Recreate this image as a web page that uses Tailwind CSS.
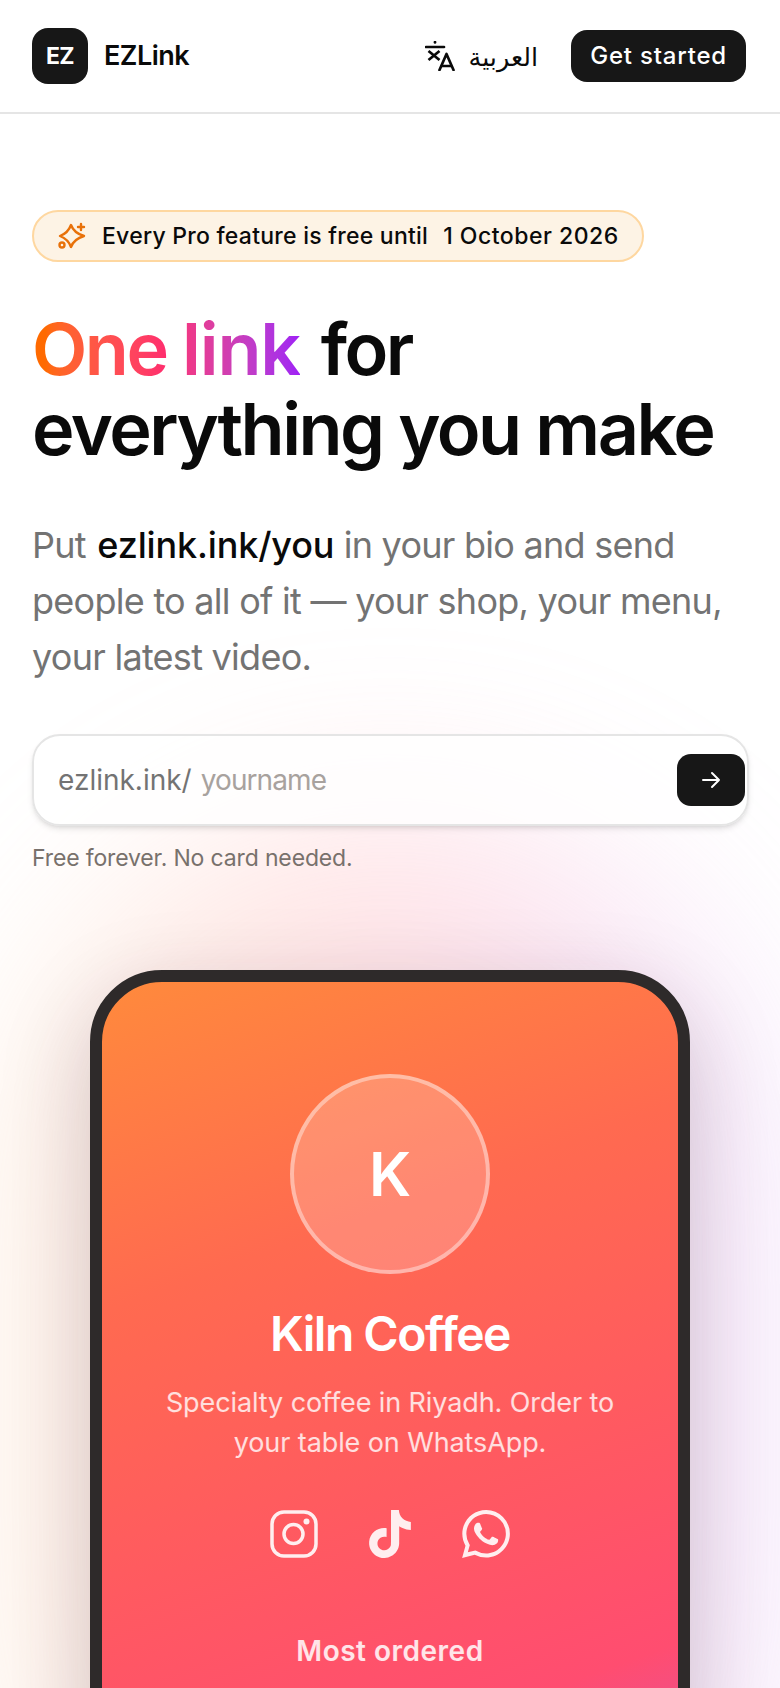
<!DOCTYPE html>
<html lang="en">
<head>
<meta charset="utf-8">
<script src="https://cdn.jsdelivr.net/npm/@tailwindcss/browser@4"></script>
<title>EZLink</title>
</head>
<body class="bg-white font-['Inter','Noto_Sans',sans-serif] text-[#0a0a0a] h-[1688px] overflow-hidden relative">
<div class="absolute left-0 right-0 top-[800px] h-[1200px] rounded-full bg-gradient-to-r from-orange-200 via-rose-300 to-purple-300 blur-[90px] opacity-30"></div>
<header class="relative h-[114px] border-b-2 border-[#e5e5e5] flex items-center justify-between pl-[32px] pr-[34px]">
  <div class="flex items-center gap-[16px]">
    <div class="w-[56px] h-[56px] rounded-[16px] bg-[#171717] text-white flex items-center justify-center text-[23px] font-bold tracking-[-0.5px]">EZ</div>
    <span class="text-[27px] font-semibold tracking-[-0.5px]">EZLink</span>
  </div>
  <div class="flex items-center gap-[33px]">
    <div class="flex items-center gap-[13px]">
      <svg class="w-[30px] h-[30px]" viewBox="0 0 30 30" fill="none" stroke="#0a0a0a" stroke-width="2.700" stroke-linecap="round" stroke-linejoin="round"><path d="M1 6h18"/><path d="M10 1v.5"/><path d="M3.500 10l11 9M14.500 10l-11 9" stroke-linecap="butt"/><path d="M14.500 29l7-16 7 16"/><path d="M17 25h9"/></svg>
      <span class="text-[25.500px] font-['Noto_Sans','DejaVu_Sans',sans-serif]">العربية</span>
    </div>
    <button class="h-[52px] px-[19px] rounded-[16px] bg-[#171717] text-white text-[24px] font-medium tracking-[0.8px]">Get started</button>
  </div>
</header>
<main class="relative px-[32px] pt-[96px]">
  <div class="inline-flex items-center gap-[15px] h-[52px] pl-[24px] pr-[23px] rounded-full border-2 border-[#fed7a0] bg-[#fdf3e5] text-[23px] font-medium whitespace-nowrap">
    <svg class="w-[28px] h-[28px] shrink-0 mr-[1px]" viewBox="0 0 28 28" fill="none" stroke="#e8710a" stroke-width="2.400" stroke-linecap="round" stroke-linejoin="round"><path d="M13 3Q16 11 26 14Q16 17 13 25Q10 17 2 14Q10 11 13 3Z"/><path d="M23 2v6M20 5h6"/><circle cx="4" cy="23" r="2.500"/></svg>
    <span class="tracking-[0.25px]">Every Pro feature is free until</span>
    <span class="tracking-[0.5px]">1 October 2026</span>
  </div>
  <h1 class="mt-[47px] text-[72px] leading-[80px] font-semibold tracking-[-2.500px] text-[#0a0a0a]">
    <span class="bg-gradient-to-r from-[#ff6a00] from-5% via-[#ff2d6e] via-50% to-[#a01ff5] bg-clip-text text-transparent">One <span class="tracking-[-1.200px]">link</span></span><span class="ml-[5px]"> for</span><br>everything you make
  </h1>
  <p class="mt-[48px] text-[36px] leading-[56px] text-[#737373] tracking-[-0.730px]">Put <span class="ml-[2px] text-[#0a0a0a] font-medium tracking-[-0.150px]">ezlink.ink/you</span> in your bio and send people to all of it — your shop, your menu, your latest video.</p>
  <div class="mt-[49px] w-[717px] h-[92px] rounded-[28px] border-2 border-[#e5e5e5] bg-white/80 shadow-md flex items-center pl-[24px] pr-[2px] text-[28px]">
    <span class="text-[#737373]">ezlink.ink/</span>
    <span class="ml-[9px] text-[#a8a29e] tracking-[-0.900px]">yourname</span>
    <button class="ml-auto w-[68px] h-[52px] rounded-[14px] bg-[#171717] flex items-center justify-center">
      <svg class="w-[24px] h-[24px]" viewBox="0 0 24 24" fill="none" stroke="white" stroke-width="2" stroke-linecap="round" stroke-linejoin="round"><path d="M4 12h16M13 5l7 7-7 7"/></svg>
    </button>
  </div>
  <p class="mt-[16px] text-[23px] leading-[32px] tracking-[-0.150px] text-[#78716c]">Free forever. No card needed.</p>
  <section class="mt-[96px] ml-[58px] w-[600px] h-[1000px] rounded-[72px] border-[12px] border-[#2e2a2a] overflow-hidden shadow-[0_30px_90px_rgba(50,25,45,0.22)] bg-[linear-gradient(160deg,#ff8a3c_0px,#ff6a50_311px,#ff5a60_578px,#ff4d70_818px,#f04f88_889px,#e850a0_1100px)] text-white flex flex-col items-center">
    <div class="mt-[92px] w-[200px] h-[200px] rounded-full border-4 border-white/40 bg-white/20 flex items-center justify-center text-[60px] font-semibold">K</div>
    <h2 class="mt-[30px] text-[48px] leading-[60px] font-semibold tracking-[-1.500px]">Kiln Coffee</h2>
    <p class="mt-[19px] w-[470px] text-center text-[27px] leading-[40px] tracking-[-0.100px] text-white/80">Specialty coffee in Riyadh. Order to your table on WhatsApp.</p>
    <div class="mt-[47px] flex gap-[48px] text-white/90">
      <svg class="w-[48px] h-[48px]" viewBox="0 0 48 48" fill="none" stroke="currentColor" stroke-width="3.500"><rect x="2" y="2" width="44" height="44" rx="12"/><circle cx="23.500" cy="24" r="9.500"/><circle cx="36.500" cy="11.500" r="3" fill="currentColor" stroke="none"/></svg>
      <svg class="w-[48px] h-[48px]" viewBox="0 0 24 24" fill="currentColor"><path d="M12.525.02c1.31-.02 2.61-.01 3.91-.02.08 1.53.63 3.09 1.75 4.17 1.12 1.11 2.7 1.62 4.24 1.79v4.03c-1.44-.05-2.89-.35-4.2-.97-.57-.26-1.1-.59-1.62-.93-.01 2.92.01 5.84-.02 8.75-.08 1.4-.54 2.79-1.35 3.94-1.31 1.92-3.58 3.17-5.91 3.21-1.43.08-2.86-.31-4.08-1.03-2.02-1.19-3.44-3.37-3.65-5.71-.02-.5-.03-1-.01-1.49.18-1.9 1.12-3.72 2.58-4.96 1.66-1.44 3.98-2.13 6.15-1.72.02 1.48-.04 2.96-.04 4.44-.99-.32-2.15-.23-3.02.37-.63.41-1.11 1.04-1.36 1.75-.21.51-.15 1.07-.14 1.61.24 1.64 1.82 3.02 3.5 2.87 1.12-.01 2.19-.66 2.77-1.61.19-.33.4-.67.41-1.06.1-1.79.06-3.57.07-5.36.01-4.03-.01-8.05.02-12.07z"/></svg>
      <svg class="w-[48px] h-[48px]" viewBox="0 0 24 24" fill="currentColor"><path d="M17.472 14.382c-.297-.149-1.758-.867-2.03-.967-.273-.099-.471-.148-.67.15-.197.297-.767.966-.94 1.164-.173.199-.347.223-.644.075-.297-.15-1.255-.463-2.39-1.475-.883-.788-1.48-1.761-1.653-2.059-.173-.297-.018-.458.13-.606.134-.133.298-.347.446-.52.149-.174.198-.298.298-.497.099-.198.05-.371-.025-.52-.075-.149-.669-1.612-.916-2.207-.242-.579-.487-.5-.669-.51-.173-.008-.371-.01-.57-.01-.198 0-.52.074-.792.372-.272.297-1.04 1.016-1.04 2.479 0 1.462 1.065 2.875 1.213 3.074.149.198 2.096 3.2 5.077 4.487.709.306 1.262.489 1.694.625.712.227 1.36.195 1.871.118.571-.085 1.758-.719 2.006-1.413.248-.694.248-1.289.173-1.413-.074-.124-.272-.198-.57-.347m-5.421 7.403h-.004a9.87 9.87 0 01-5.031-1.378l-.361-.214-3.741.982.998-3.648-.235-.374a9.86 9.86 0 01-1.51-5.26c.001-5.45 4.436-9.884 9.888-9.884 2.64 0 5.122 1.03 6.988 2.898a9.825 9.825 0 012.893 6.994c-.003 5.45-4.437 9.884-9.885 9.884m8.413-18.297A11.815 11.815 0 0012.05 0C5.495 0 .16 5.335.157 11.892c0 2.096.547 4.142 1.588 5.945L.057 24l6.305-1.654a11.882 11.882 0 005.683 1.448h.005c6.554 0 11.89-5.335 11.893-11.893a11.821 11.821 0 00-3.48-8.413z"/></svg>
    </div>
    <p class="mt-[73px] text-[28px] leading-[40px] font-semibold text-white/85 tracking-[0.5px]">Most ordered</p>
  </section>
</main>
</body>
</html>
